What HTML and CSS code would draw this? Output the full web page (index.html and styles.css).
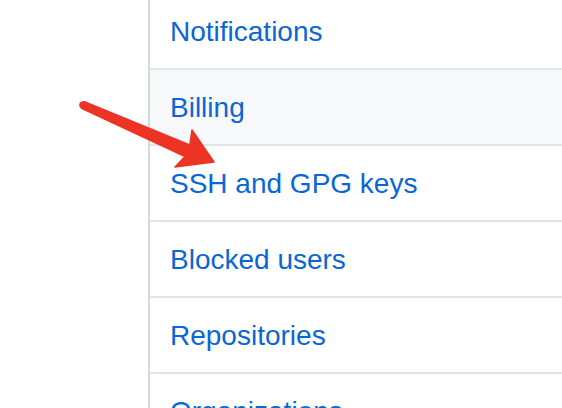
FILE: index.html
```html
<!DOCTYPE html>
<html lang="en">
<head>
    <meta charset="UTF-8">
    <meta name="viewport" content="width=device-width, initial-scale=1.0">
    <title>Settings menu</title>
    <link rel="stylesheet" href="styles.css">
</head>
<body>
    <div class="page">
        <div class="gutter"></div>

        <!-- Settings side menu -->
        <nav class="menu">
            <a class="menu-item" href="#">Notifications</a>
            <a class="menu-item hover" href="#">Billing</a>
            <a class="menu-item" href="#">SSH and GPG keys</a>
            <a class="menu-item" href="#">Blocked users</a>
            <a class="menu-item" href="#">Repositories</a>
            <a class="menu-item" href="#">Organizations</a>
        </nav>
    </div>

    <!-- Annotation arrow -->
    <svg class="arrow" width="562" height="408" viewBox="0 0 562 408">
        <circle cx="83" cy="105" r="3.8" fill="#ec3324"/>
        <polygon fill="#ec3324" stroke="#ec3324" stroke-width="1.5" stroke-linejoin="round"
                 points="84.4,101.6 189.8,145 192,130 214,162 175,167 185,156.5 81.6,108.4"/>
    </svg>
</body>
</html>
```

FILE: styles.css
```css
* {
    margin: 0;
    padding: 0;
    box-sizing: border-box;
}

body {
    background: #fff;
    font-family: 'Liberation Sans', Arial, sans-serif;
    overflow: hidden;
    height: 408px;
}

.page {
    display: flex;
    height: 100%;
}

.gutter {
    width: 148px;
    flex-shrink: 0;
}

.menu {
    flex: 1;
    display: flex;
    flex-direction: column;
    margin-top: -4px;
    border-left: 2px solid #d5d8dc;
}

.menu-item {
    display: block;
    padding: 17px 20px 15px;
    font-size: 28px;
    line-height: 42px;
    color: #0a66d4;
    text-decoration: none;
    border-bottom: 2px solid #e1e4e8;
    white-space: nowrap;
}

.menu-item:first-child {
    padding-top: 15px;
}

.menu-item.hover {
    background-color: #f6f8fa;
}

/* Red arrow drawn over the menu */
.arrow {
    position: absolute;
    top: 0;
    left: 0;
    pointer-events: none;
}
```
